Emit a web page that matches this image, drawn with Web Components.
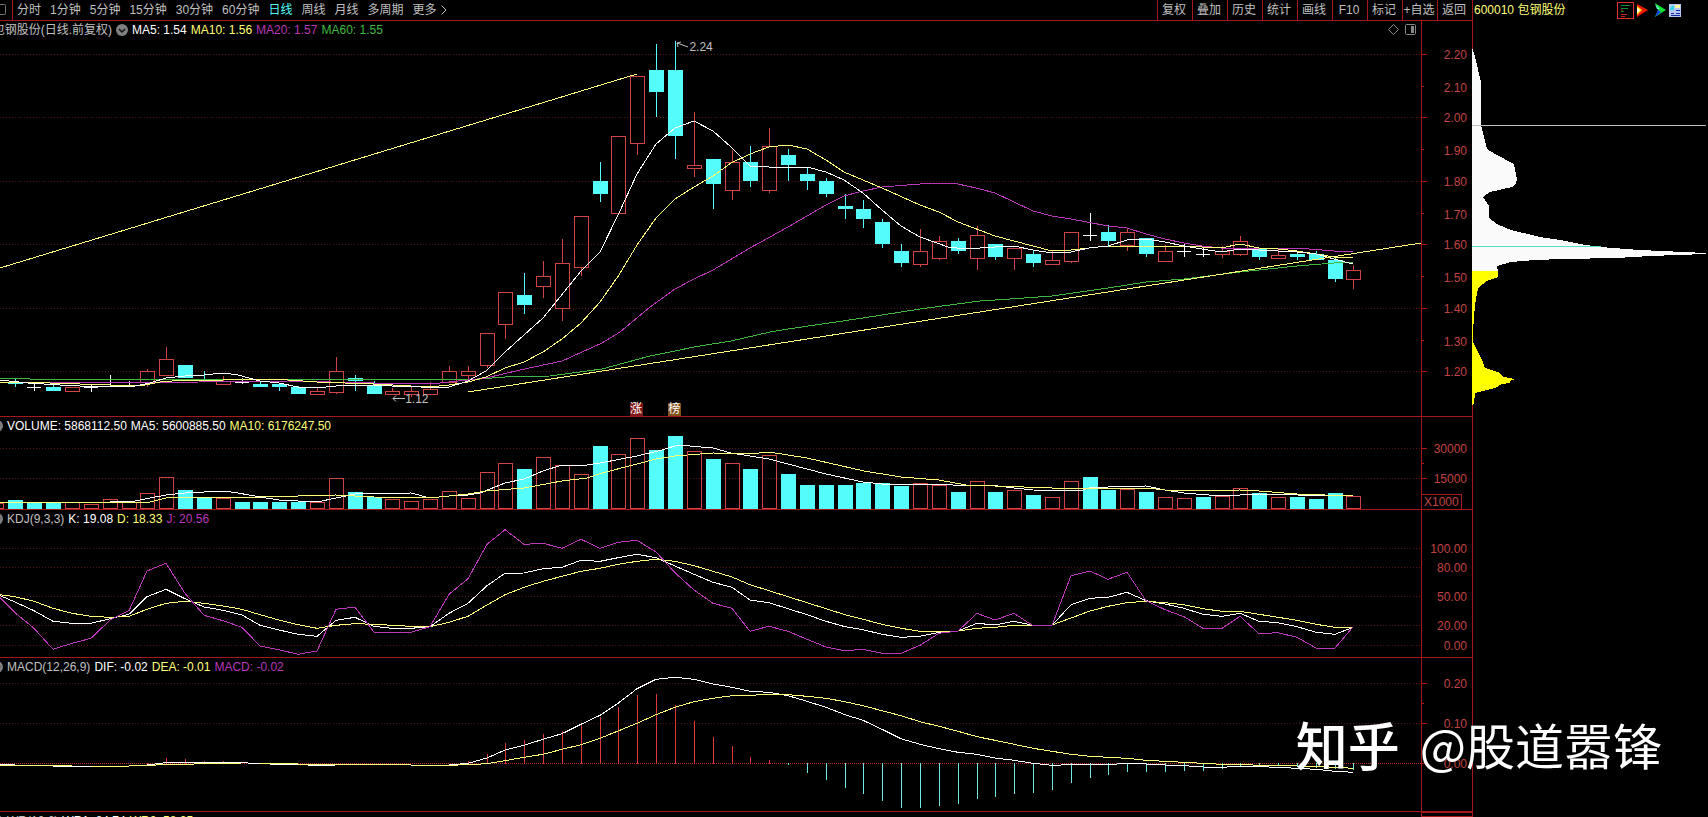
<!DOCTYPE html>
<html lang="zh-CN">
<head>
<meta charset="utf-8">
<title>包钢股份 日线</title>
<style>
html,body{margin:0;height:100%;background:#000;overflow:hidden}
body{font:12px/16px "Liberation Sans","Noto Sans CJK SC",sans-serif;color:#c0c0c0}
</style>
</head>
<body>
<stock-terminal></stock-terminal>
<script>
const RED = '#a81818', UP = '#d04444', CYAN = '#54fcfc', YELLOW = '#ffff78', WHITE = '#fff', MAGENTA = '#b838b8', GREEN = '#40b840';

/* Candle slots are evenly spaced along the time axis */
const slot = i => Math.round(15.45 + 18.845 * i);

/* [kind, high, body top, body bottom, low]; R rising, C falling, W unchanged */
const candles = [
 ['C',379,382,384,387],['W',384,387,388,391],['C',385,387,391,391],['R',387,387,391,391],['W',385,387,388,392],
 ['W',375,386,387,387],['W',381,385,386,387],['R',369,371,382,387],['R',347,359,375,376],['C',365,365,378,378],
 ['C',371,379,381,382],['R',376,381,384,384],['W',380,382,383,384],['C',382,384,387,387],['C',383,384,387,391],
 ['C',386,387,394,394],['R',388,391,394,394],['R',357,371,392,394],['C',375,378,381,391],['C',381,385,394,394],
 ['R',388,391,394,394],['R',387,391,394,397],['R',382,389,394,394],['R',366,371,382,383],['R',366,371,375,380],
 ['R',333,333,365,368],['R',292,292,324,339],['C',273,295,305,314],['R',261,276,286,298],['R',239,263,308,321],
 ['R',216,216,267,276],['C',162,181,194,202],['R',136,136,213,213],['R',76,76,143,155],['C',44,70,92,117],
 ['C',41,70,136,159],['R',112,165,168,177],['C',159,159,184,209],['R',150,162,190,200],['C',146,162,181,187],
 ['R',128,146,190,193],['C',149,155,165,181],['C',167,174,181,190],['C',178,181,194,197],['C',194,206,209,219],
 ['C',200,209,219,228],['C',219,222,244,248],['C',244,251,263,267],['R',229,251,264,267],['R',236,241,258,260],
 ['C',238,241,251,254],['R',226,235,258,270],['C',244,244,257,260],['R',248,248,258,270],['C',251,254,263,267],
 ['R',251,260,264,264],['R',232,232,261,263],['W',213,235,236,241],['C',225,232,241,247],['R',228,232,245,251],
 ['C',238,238,254,257],['R',245,251,261,261],['W',244,251,252,257],['W',248,254,255,257],['R',246,251,254,258],
 ['R',236,241,254,256],['C',249,249,257,260],['R',248,255,258,259],['C',251,254,257,260],['C',251,254,260,260],
 ['C',257,260,279,282],['R',265,270,279,289]];

/* Volume bars: kind and top edge */
const volumes = 'C500 C502 C502 R502 R504 R499 R502 R493 R477 C490 C498 R498 C502 C502 C502 C502 R502 R478 C492 C497 R499 R501 R499 R491 R498 R472 R463 C469 R457 R465 R474 C446 R454 R438 C450 C436 R451 C459 R463 C469 R455 C474 C485 C485 C485 C483 C483 C486 R483 R485 C492 R481 C492 R490 C495 R497 R481 C477 C490 R489 C492 R497 R498 C497 R496 R488 C493 R497 C497 C499 C493 R496'
  .split(' ').map(s => [s[0], +s.slice(1)]);

/* Oscillator samples, in thirds of a pixel below the oscillator origin, one per slot from slot -1 */
const ORIGIN = 500;
const J = [283,338,385,448,430,415,360,332,213,190,280,346,362,382,438,449,463,453,328,321,397,397,397,380,283,236,133,89,133,130,145,118,145,127,121,156,218,270,310,325,394,379,394,418,441,452,448,460,460,436,400,393,340,360,340,377,376,227,213,238,217,302,329,350,385,385,349,401,398,412,444,444,381];
const K = [283,306,332,364,370,370,356,343,290,268,296,321,331,345,376,390,403,409,361,352,379,385,385,380,340,310,257,220,219,206,202,181,184,173,163,173,198,223,247,262,300,308,326,344,364,380,389,403,412,409,397,393,370,375,364,376,376,314,295,292,277,302,312,325,343,349,340,364,368,380,397,403,382];
const D = [283,290,304,325,340,349,352,349,328,310,304,310,318,328,344,360,374,385,376,371,373,376,379,380,367,349,315,284,262,244,229,214,205,193,184,178,184,197,214,231,254,272,290,308,326,344,358,373,385,394,394,393,385,382,376,376,375,354,333,319,308,304,308,314,326,334,334,343,352,361,373,382,381];
const DIF = [793,795,796,798,798,798,798,798,795,788,788,787,787,788,791,793,794,796,795,794,794,795,795,796,795,790,774,750,736,718,701,673,646,610,566,538,532,538,552,562,574,577,587,604,622,644,661,688,716,733,746,757,763,774,781,790,796,794,792,793,791,792,795,797,801,802,799,800,802,805,808,814,817];
const DEA = [796,796,796,797,798,798,798,798,796,794,793,791,790,789,789,790,792,794,794,794,794,794,795,796,796,794,791,782,772,763,748,734,715,693,670,644,622,605,595,587,586,583,584,589,595,605,617,632,647,665,679,694,710,721,733,745,754,763,769,772,775,781,784,787,790,793,793,796,796,798,799,802,805];
const HIST = {7:788,8:774,9:777,10:783,11:784,24:783,25:763,26:728,27:720,28:702,29:692,30:670,31:652,32:620,33:586,34:582,35:615,36:663,37:711,38:738,39:771,40:780,41:795,42:819,43:840,44:864,45:882,46:903,47:923,48:923,49:917,50:911,51:896,52:890,53:881,54:878,55:869,56:849,57:833,58:825,59:815,60:815,61:815,62:812,63:812,64:808,65:801,66:802,67:799,68:802,69:803,70:808,71:809};

/* Moving averages as x,y pairs */
const priceLines = [
 [GREEN,'0,378 30,379 480,379 505,377 550,376 602,369 650,356 675,351 694,347 731,341 770,332 788,329 829,323 863,318 920,309 980,301 1010,299 1052,296 1108,288 1146,282 1184,279 1240,272 1259,270 1297,266 1334,263 1353,262'],
 [MAGENTA,'0,382 110,383 288,381 374,383 440,383 486,378 520,370 562,361 602,343 620,332 650,307 675,289 694,279 713,270 750,248 788,227 826,205 844,196 863,191 882,187 920,184 939,183 958,184 976,188 995,193 1033,211 1052,216 1071,219 1108,226 1127,228 1146,234 1165,239 1184,243 1202,246 1221,248 1297,248 1334,251 1353,252'],
 [YELLOW,'0,382 50,383 110,385 140,386 160,382 185,380 204,381 223,380 242,379 288,380 317,382 345,383 374,384 411,386 430,387 449,385 468,382 486,377 505,368 524,362 543,352 562,339 581,323 600,302 619,275 637,245 656,218 675,199 694,187 713,176 731,163 750,154 769,147 788,145 807,149 826,160 844,172 882,188 920,205 939,212 958,222 995,236 1033,246 1052,251 1071,250 1089,248 1108,246 1202,247 1221,248 1240,244 1259,248 1278,249 1297,251 1316,254 1334,257 1353,258'],
 [WHITE,'0,380 28,383 60,385 100,387 135,386 150,383 166,378 185,376 204,375 223,373 238,375 260,381 279,383 298,387 317,388 336,386 374,385 392,386 411,386 430,388 449,387 468,381 486,371 505,352 543,318 581,271 600,252 619,213 637,174 656,144 675,128 694,121 713,131 731,147 750,166 769,167 807,167 826,172 844,180 863,193 882,210 901,226 920,237 948,247 966,249 995,247 1014,246 1033,250 1052,253 1071,252 1089,248 1108,246 1127,240 1146,239 1165,242 1184,246 1202,249 1221,252 1240,249 1259,250 1278,251 1297,252 1316,254 1334,259 1353,264'],
 [YELLOW,'0,268 637,74'],[YELLOW,'468,392 1421,243']];
const volumeLines = [
 [WHITE,'0,502 110,502 135,501 150,498 166,495 185,493 223,491 238,493 260,497 279,500 317,502 336,498 355,494 411,493 430,498 449,496 468,495 480,493 505,483 524,479 543,471 562,465 587,465 600,463 637,456 662,450 678,445 713,448 731,453 769,459 788,464 826,474 863,482 882,484 940,484 966,486 990,485 1014,488 1033,490 1080,491 1089,488 1108,487 1146,486 1165,490 1184,493 1221,496 1259,494 1297,495 1353,496'],
 [YELLOW,'0,502 150,502 166,498 185,497 260,497 336,495 374,497 430,498 468,494 486,491 524,488 562,481 587,478 602,473 637,464 656,459 675,456 713,453 750,454 769,452 807,458 864,471 901,477 939,480 966,485 1052,488 1146,488 1165,490 1202,491 1240,490 1259,491 1297,494 1353,496']];

const line = (color, pts) => `<polyline points="${pts}" fill="none" stroke="${color}"/>`;
const series = (color, a) => line(color, a.map((v, k) => `${slot(k - 1)},${(ORIGIN + v / 3).toFixed(1)}`).join(' '));
const stem = (x, a, b, c) => b > a ? `<line x1="${x + .5}" x2="${x + .5}" y1="${a}" y2="${b}" stroke="${c}"/>` : '';
const hollow = (x, a, b) => `<rect x="${x - 6.5}" y="${a + .5}" width="14" height="${b - a - 1}" fill="none" stroke="${UP}"/>`;
const solid = (x, a, b) => `<rect x="${x - 7}" y="${a}" width="15" height="${b - a}" fill="${CYAN}"/>`;
const bar = (kind, x, a, b) => kind === 'R' ? hollow(x, a, b) : solid(x, a, b);

const drawings = {
  price: () => candles.map(([t, h, a, b, l], i) => {
    const x = slot(i);
    if (t === 'R') return stem(x, h, a, UP) + hollow(x, a, b + 1) + stem(x, b + 1, l, UP);
    if (t === 'C') return stem(x, h, l, CYAN) + solid(x, a, b);
    return stem(x, h, l, WHITE) + `<rect x="${x - 7}" y="${a}" width="14" height="1" fill="#fff"/>`;
  }).join('') + priceLines.map(p => line(...p)).join(''),
  volume: () => bar('R', -4, 503, 509) + volumes.map(([t, y], i) => bar(t, slot(i), y, 509)).join('') + volumeLines.map(p => line(...p)).join(''),
  kdj: () => series(WHITE, K) + series(YELLOW, D) + series(MAGENTA, J),
  macd: () => Object.entries(HIST).map(([i, v]) => {
      const y = Math.round(ORIGIN + v / 3);
      return y < 764 ? stem(slot(+i), y, 764, '#e03838') : stem(slot(+i), 763, y, '#70e8e0');
    }).join('') + series(WHITE, DIF) + series(YELLOW, DEA),
  wr: () => ''
};

/* Panels: top edge, plot height, grid rows, axis labels, and small ticks */
const panels = {
  price: {top:21, h:395, grid:[54,117,181,244,308,371], marks:[86,149,213,276,340],
    labels:[[54,'2.20'],[87,'2.10'],[117,'2.00'],[150,'1.90'],[181,'1.80'],[214,'1.70'],[244,'1.60'],[277,'1.50'],[308,'1.40'],[341,'1.30'],[371,'1.20']]},
  volume: {top:417, h:92, grid:[448,478], marks:[463], labels:[[448,'30000'],[478,'15000']], unit:'X1000'},
  kdj: {top:510, h:147, grid:[548,567,596,625,645], marks:[], labels:[[548,'100.00'],[567,'80.00'],[596,'50.00'],[625,'20.00'],[645,'0.00']]},
  macd: {top:658, h:153, grid:[683,723,763], marks:[703], labels:[[683,'0.20'],[723,'0.10'],[763,'0.00']]},
  wr: {top:812, h:5, grid:[], marks:[], labels:[]}
};

class Base extends HTMLElement {
  connectedCallback() {
    if (!this.shadowRoot) this.attachShadow({mode: 'open'}).innerHTML = this.render();
  }
}

customElements.define('period-bar', class extends Base {
  render() {
    const periods = ['分时','1分钟','5分钟','15分钟','30分钟','60分钟','日线','周线','月线','多周期','更多'];
    const tools = ['复权','叠加','历史','统计','画线','F10','标记','+自选','返回'];
    return `<style>
      :host{display:flex;justify-content:space-between;height:20px;border-bottom:1px solid ${RED};overflow:hidden}
      nav,div{display:flex;flex:none}
      nav{gap:9px;align-items:center}
      button{all:unset;box-sizing:border-box;font:12px/20px "Liberation Sans","Noto Sans CJK SC",sans-serif;color:#c0c0c0;white-space:nowrap;cursor:pointer}
      .on{color:${CYAN}}
      div button{width:35px;padding-right:2px;text-align:center;border-left:1px solid ${RED}}
      .box{width:12px;height:20px;border-right:1px solid ${RED};margin-right:-5px}
      .more{margin-left:-5px}
      svg{display:block}
    </style>
    <nav><svg class="box" viewBox="0 0 12 20" aria-hidden="true"><rect x="-5.5" y="4.5" width="11" height="10" rx="1" fill="none" stroke="#777"/></svg>
    ${periods.map(p => `<button${p === '日线' ? ' class="on"' : ''}>${p}</button>`).join('')}
    <svg class="more" width="6" height="10" viewBox="0 0 6 10" fill="none" stroke="#c0c0c0" aria-hidden="true"><path d="M.5 .5L5 5L.5 9.5"/></svg></nav>
    <div>${tools.map(t => `<button>${t}</button>`).join('')}</div>`;
  }
});

customElements.define('panel-legend', class extends Base {
  render() {
    return `<style>
      :host{display:flex;align-items:center;height:17px;gap:4px;white-space:nowrap;overflow:hidden;color:#c0c0c0}
    </style><slot></slot>`;
  }
});

customElements.define('fold-dot', class extends Base {
  render() {
    return `<style>:host{display:block;flex:none;width:12px;height:12px}svg{display:block}</style>
    <svg width="12" height="12" viewBox="0 0 12 12" aria-hidden="true"><circle cx="6" cy="6" r="6" fill="#808080"/><path d="M3 5L6 8L9 5" fill="none" stroke="#111" stroke-width="1.5"/></svg>`;
  }
});

customElements.define('value-axis', class extends Base {
  render() {
    const kind = this.getAttribute('kind'), p = panels[kind];
    let last = p.top;
    const ticks = p.labels.map(([y, t]) => { const g = y - last; last = y; return `<div style="flex:${g} 0 0px"><span>${t}</span></div>`; }).join('');
    const dash = (y, w) => `<path d="M0 ${y + .5}h${w}" stroke="${RED}"/>`;
    return `<style>
      :host{display:grid;border-left:1px solid ${RED};border-bottom:1px solid ${RED};color:#c04444;min-height:0;min-width:0}
      :host([kind=wr]){border-top:1px solid ${RED}}
      svg,section{grid-area:1/1;width:100%;height:100%;min-height:0}
      svg{display:block}
      section{display:flex;flex-direction:column;align-items:flex-end;box-sizing:border-box;padding-right:5px}
      div{display:flex;align-items:flex-end;min-height:0}
      span{line-height:16px;margin-bottom:-9px}
      i{flex:${p.top + p.h - last} 0 0px}
      b{grid-area:1/1;align-self:end;justify-self:start;font-weight:400;line-height:14px;border:solid ${RED};border-width:1px 1px 0 0;padding:0 2px}
    </style>
    <svg viewBox="0 ${p.top} 50 ${p.h}" preserveAspectRatio="none" shape-rendering="crispEdges" aria-hidden="true">${kind === 'kdj' ? '' : p.grid.map(y => dash(y, 5)).join('')}${p.marks.map(y => dash(y, 2)).join('')}</svg>
    <section>${ticks}<i></i></section>${p.unit ? `<b>${p.unit}</b>` : ''}`;
  }
});

customElements.define('plot-panel', class extends Base {
  render() {
    const kind = this.getAttribute('kind'), p = panels[kind];
    return `<style>
      :host{display:grid;grid-template-columns:minmax(0,1fr) 51px;min-height:0;overflow:hidden}
      main{display:grid;position:relative;min-width:0;min-height:0;border-bottom:1px solid ${RED}}
      :host([kind=wr]) main{border:0}
      svg{grid-area:1/1;display:block;width:100%;height:100%;min-height:0}
      svg *{vector-effect:non-scaling-stroke}
      header{grid-area:1/1;align-self:start;z-index:1;min-width:0}
    </style>
    <main><svg viewBox="0 ${p.top} 1421 ${p.h}" preserveAspectRatio="none" shape-rendering="crispEdges" role="img" aria-label="${kind}">
      ${p.grid.map(y => `<path d="M0 ${y + .5}H1421" stroke="${y === 763 ? '#b03020' : '#581414'}" stroke-dasharray="${y === 763 ? '1 1' : '1 2'}"/>`).join('')}
      ${drawings[kind]()}</svg><header><slot></slot></header><slot name="note"></slot></main>
    <value-axis kind="${kind}"></value-axis>`;
  }
});

customElements.define('price-note', class extends Base {
  render() {
    return `<style>:host{display:flex;align-items:center;position:absolute;left:var(--x);top:var(--y);line-height:14px;color:#c0c0c0}</style><slot></slot>`;
  }
});

customElements.define('chip-profile', class extends Base {
  render() {
    return `<style>
      :host{display:grid;grid-template-rows:20px minmax(0,1fr);border-left:1px solid ${RED};min-width:0;color:#ffff78}
      header{display:flex;align-items:center;padding:0 27px 0 1px;gap:6px;white-space:nowrap}
      header span{flex:1;line-height:18px}
      svg{display:block;flex:none}
      .plot{width:calc(100% + 1px);height:100%;margin-left:-1px;min-height:0}
    </style>
    <header><span>600010 包钢股份</span>
      <svg width="64" height="18" viewBox="0 0 64 18" aria-hidden="true">
        <rect x=".5" y="1.5" width="16" height="16" fill="none" stroke="#e03030"/>
        <path d="M4 4.5h9M4 7.5h7M4 10.5h3" stroke="#109030"/><path d="M4 13.5h6M4 15.5h4M4 9h2" stroke="#c02020"/>
        <path d="M20 3L31 9L20 16Z" fill="#f01808"/><path d="M20 5L25 9L20 14Z" fill="#ffe020"/><path d="M20 7L23 9L20 12Z" fill="#fff"/>
        <path d="M38 2L49 9L38 16L41 9Z" fill="#10e030"/><path d="M41 9L44 11L38 16Z" fill="#1838f0"/><path d="M38 3L43 8H40Z" fill="#60f0d0"/>
        <rect x="55" y="3" width="9" height="7" fill="#d0d8f8"/><rect x="56" y="8" width="8" height="8" fill="#a8c0f0"/><rect x="52" y="3" width="12" height="13" fill="#b8c8f4"/><path d="M54 12.5h3M59 12.5h4M54 14.5h9M59 9.5h4" stroke="#1828a0"/><path d="M53 7l4-3v5h-4z" fill="#30d8e8"/><path d="M58 4h5v3h-5z" fill="#fff8a0"/>
      </svg></header>
    <svg class="plot" viewBox="1472 20 236 797" preserveAspectRatio="none" shape-rendering="crispEdges" role="img" aria-label="筹码分布">
      <path fill="#fafafa" d="M1472 47L1475 57L1481 82V125L1487 149L1495 154L1514 164L1517 180L1516 183L1512 187L1490 192L1483 197L1489 206V218L1497 224L1511 230L1540 237L1560 240L1580 244L1600 247L1640 250L1706 253V254L1650 256L1617 258L1562 259L1535 260L1511 262L1497 266L1498 271H1472Z"/>
      <path fill="#ff0" d="M1472 271H1498V277L1487 281L1478 288L1475 305L1473 330V342L1482 360L1485 368L1498 372L1504 377L1515 379L1510 381V383L1502 384L1495 388L1475 393L1474 404L1472 405Z"/>
      <rect x="1472" y="125" width="234" height="1" fill="#c0c0c0"/><rect x="1472" y="246" width="129" height="1" fill="#50e0d0"/>
    </svg>`;
  }
});

customElements.define('water-mark', class extends Base {
  render() {
    return `<style>
      :host{display:flex;align-items:center;gap:20px;position:absolute;right:46px;bottom:37px;color:#fff;font:49px/72px "Noto Sans CJK SC",sans-serif;white-space:nowrap;pointer-events:none}
      b{font-size:52px;font-weight:500}
    </style><b>知乎</b><span>@股道嚣锋</span>`;
  }
});

customElements.define('stock-terminal', class extends Base {
  render() {
    return `<style>
      :host{display:grid;grid-template-columns:minmax(0,1fr) 236px;height:100vh;position:relative;overflow:hidden;background:#000}
      .desk{display:grid;grid-template-rows:21px minmax(0,396fr) minmax(0,93fr) minmax(0,148fr) minmax(0,154fr) 5px;min-width:0}
      .title{display:flex;justify-content:flex-end;width:112px;flex:none;overflow:hidden}
      fold-dot.cut{margin-left:-9px}
      .w{color:#fff}.y{color:${YELLOW}}.m{color:${MAGENTA}}.g{color:${GREEN}}
      .corner{margin-left:auto;margin-right:4px;flex:none}
      .tag{font-size:12px;line-height:13px;width:13px;height:13px;color:#fff;text-align:center}
      .rise{background:#801818}.list{background:#80501c}
    </style>
    <section class="desk">
      <period-bar></period-bar>
      <plot-panel kind="price">
        <panel-legend><span class="title">包钢股份(日线.前复权)</span><fold-dot></fold-dot>
          <span class="w">MA5: 1.54</span><span class="y">MA10: 1.56</span><span class="m">MA20: 1.57</span><span class="g">MA60: 1.55</span>
          <svg class="corner" width="29" height="13" viewBox="0 0 29 13" fill="none" stroke="#888" aria-hidden="true"><path d="M5.5 1.5L10.5 6.5L5.5 11.5L.5 6.5Z"/><rect x="17.5" y="1.5" width="10" height="10" rx="1"/><path d="M23 3h3v7h-3z" fill="#888" stroke="none"/></svg>
        </panel-legend>
        <price-note slot="note" style="--x:47.6%;--y:4.8%"><svg width="13" height="12" viewBox="0 0 13 12" fill="none" stroke="#c0c0c0" aria-hidden="true"><path d="M12 6L1 2M5 1L1 2L2 6"/></svg>2.24</price-note>
        <price-note slot="note" style="--x:27.6%;--y:94%"><svg width="13" height="10" viewBox="0 0 13 10" fill="none" stroke="#c0c0c0" aria-hidden="true"><path d="M13 4.5H1M4 1.5L1 4.5L4 7.5"/></svg>1.12</price-note>
        <price-note slot="note" style="--x:44.3%;--y:96.7%"><span class="tag rise">涨</span></price-note>
        <price-note slot="note" style="--x:47%;--y:96.7%"><span class="tag list">榜</span></price-note>
      </plot-panel>
      <plot-panel kind="volume"><panel-legend><fold-dot class="cut"></fold-dot><span class="w">VOLUME: 5868112.50</span><span class="w">MA5: 5600885.50</span><span class="y">MA10: 6176247.50</span></panel-legend></plot-panel>
      <plot-panel kind="kdj"><panel-legend><fold-dot class="cut"></fold-dot><span>KDJ(9,3,3)</span><span class="w">K: 19.08</span><span class="y">D: 18.33</span><span class="m">J: 20.56</span></panel-legend></plot-panel>
      <plot-panel kind="macd"><panel-legend><fold-dot class="cut"></fold-dot><span>MACD(12,26,9)</span><span class="w">DIF: -0.02</span><span class="y">DEA: -0.01</span><span class="m">MACD: -0.02</span></panel-legend></plot-panel>
      <plot-panel kind="wr"><panel-legend><fold-dot class="cut"></fold-dot><span>WR(10,6)</span><span class="w">WR1: 84.74</span><span class="y">WR2: 58.25</span></panel-legend></plot-panel>
    </section>
    <chip-profile></chip-profile>
    <water-mark></water-mark>`;
  }
});
</script>
</body>
</html>
